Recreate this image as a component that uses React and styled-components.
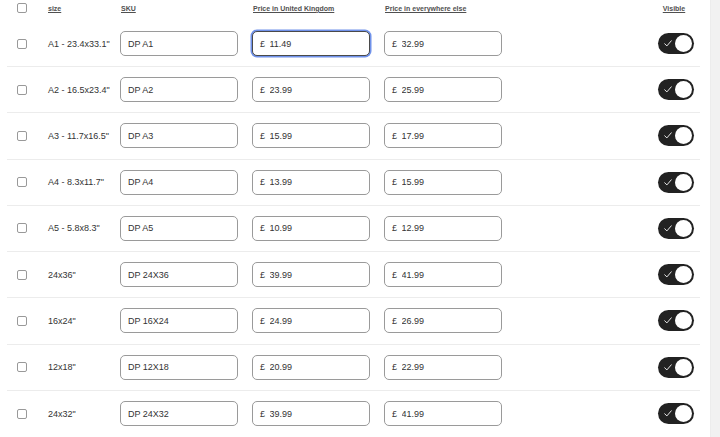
import React from "react";
import styled, { createGlobalStyle } from "styled-components";

const Global = createGlobalStyle`
  html, body { margin: 0; padding: 0; background: #fff; }
  body { font-family: "Liberation Sans", Arial, sans-serif; color: #333; overflow: hidden; -webkit-font-smoothing: antialiased; }
`;

const Page = styled.div`
  display: flex;
  width: 720px;
  height: 437px;
  overflow: hidden;
`;

const Table = styled.div`
  flex: 1;
  padding-left: 7px;
  padding-right: 10px;
  display: flex;
  flex-direction: column;
`;

const ScrollTrack = styled.div`
  width: 9px;
  flex: none;
  background: #f1f1f1;
  border-left: 1px solid #ececec;
`;

const cols = "41px 72px 132px 132px 118px 1fr 36px";

const HeaderRow = styled.div`
  display: grid;
  grid-template-columns: ${cols};
  align-items: center;
  height: 21px;
  box-sizing: border-box;
  padding: 0 6px 4px 0;
`;

const HeadLabel = styled.span`
  font-size: 7px;
  font-weight: 700;
  color: #505050;
  text-decoration: underline;
  text-underline-offset: 1px;
  padding-left: ${(p) => p.$pad || 0}px;
  justify-self: ${(p) => (p.$center ? "center" : "start")};
  margin-left: ${(p) => p.$shift || 0}px;
  white-space: nowrap;
`;

const Row = styled.div`
  display: grid;
  grid-template-columns: ${cols};
  align-items: center;
  height: 46.5px;
  box-sizing: border-box;
  padding-right: 6px;
  border-bottom: ${(p) => (p.$last ? "none" : "1px solid #ececec")};
`;

const CheckCell = styled.div`
  padding-left: 10px;
  display: flex;
  align-items: center;
`;

const Box = styled.span`
  display: block;
  width: 10px;
  height: 10px;
  box-sizing: border-box;
  border: 1px solid #999;
  border-radius: 2px;
  background: #fff;
`;

const SizeText = styled.span`
  font-size: 9px;
  color: #333;
  white-space: nowrap;
`;

const Field = styled.label`
  width: 118px;
  height: 25px;
  box-sizing: border-box;
  display: flex;
  align-items: center;
  gap: 4.5px;
  padding: 0 7px;
  border-radius: 5px;
  background: #fff;
  border: ${(p) => (p.$focus ? "1.5px solid #4a4a4a" : "1px solid #9a9a9a")};
  box-shadow: ${(p) => (p.$focus ? "0 0 0 1.5px #7092ea" : "none")};
`;

const Prefix = styled.span`
  font-size: 9px;
  color: #333;
`;

const Input = styled.input`
  border: none;
  outline: none;
  padding: 0;
  margin: 0;
  width: 100%;
  background: transparent;
  font-family: "Liberation Sans", Arial, sans-serif;
  font-size: 9px;
  color: #333;
`;

const Toggle = styled.span`
  position: relative;
  display: block;
  width: 36px;
  height: 21px;
  border-radius: 11px;
  background: #222;
`;

const Knob = styled.span`
  position: absolute;
  right: 2px;
  top: 2px;
  width: 17px;
  height: 17px;
  border-radius: 50%;
  background: #fff;
`;

const CheckMark = styled.svg`
  position: absolute;
  left: 6px;
  top: 7px;
`;

const rows = [
  { size: 'A1 - 23.4x33.1"', sku: "DP A1", uk: "11.49", other: "32.99", focus: true },
  { size: 'A2 - 16.5x23.4"', sku: "DP A2", uk: "23.99", other: "25.99" },
  { size: 'A3 - 11.7x16.5"', sku: "DP A3", uk: "15.99", other: "17.99" },
  { size: 'A4 - 8.3x11.7"', sku: "DP A4", uk: "13.99", other: "15.99" },
  { size: 'A5 - 5.8x8.3"', sku: "DP A5", uk: "10.99", other: "12.99" },
  { size: '24x36"', sku: "DP 24X36", uk: "39.99", other: "41.99" },
  { size: '16x24"', sku: "DP 16X24", uk: "24.99", other: "26.99" },
  { size: '12x18"', sku: "DP 12X18", uk: "20.99", other: "22.99" },
  { size: '24x32"', sku: "DP 24X32", uk: "39.99", other: "41.99" },
];

function Switch() {
  return (
    <Toggle>
      <CheckMark width="8" height="7" viewBox="0 0 8 7">
        <path d="M0.7 3.8 L2.9 5.9 L7.3 0.8" fill="none" stroke="#fff" strokeWidth="0.9" strokeLinecap="round" strokeLinejoin="round" />
      </CheckMark>
      <Knob />
    </Toggle>
  );
}

export default function App() {
  return (
    <Page>
      <Global />
      <Table>
        <HeaderRow>
          <CheckCell><Box /></CheckCell>
          <HeadLabel>size</HeadLabel>
          <HeadLabel $pad={1}>SKU</HeadLabel>
          <HeadLabel $pad={1}>Price in United Kingdom</HeadLabel>
          <HeadLabel $pad={1}>Price in everywhere else</HeadLabel>
          <span />
          <HeadLabel $center $shift={-4}>Visible</HeadLabel>
        </HeaderRow>
        {rows.map((r, i) => (
          <Row key={r.sku} $last={i === rows.length - 1}>
            <CheckCell><Box /></CheckCell>
            <SizeText>{r.size}</SizeText>
            <div>
              <Field>
                <Input defaultValue={r.sku} readOnly />
              </Field>
            </div>
            <div>
              <Field $focus={r.focus}>
                <Prefix>£</Prefix>
                <Input defaultValue={r.uk} readOnly />
              </Field>
            </div>
            <div>
              <Field>
                <Prefix>£</Prefix>
                <Input defaultValue={r.other} readOnly />
              </Field>
            </div>
            <span />
            <Switch />
          </Row>
        ))}
      </Table>
      <ScrollTrack />
    </Page>
  );
}
